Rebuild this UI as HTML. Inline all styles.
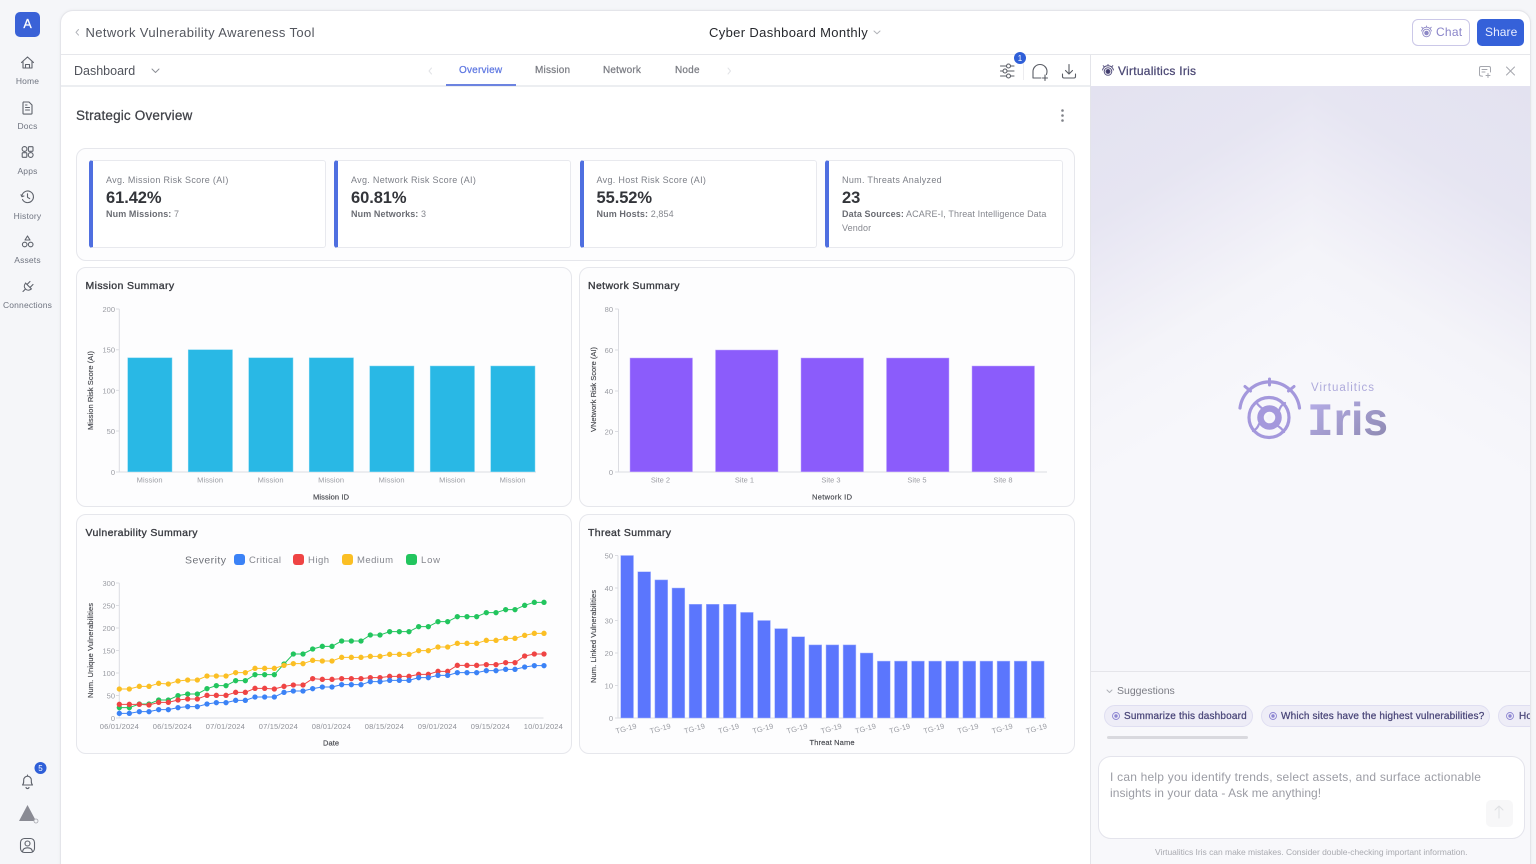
<!DOCTYPE html>
<html><head><meta charset="utf-8"><title>Cyber Dashboard Monthly</title>
<style>
*{box-sizing:border-box}
html,body{margin:0;padding:0;width:1536px;height:864px;overflow:hidden;background:#f5f6f9;font-family:"Liberation Sans",sans-serif}
.root{position:relative;width:1536px;height:864px;overflow:hidden;filter:blur(.3px)}
.a{position:absolute}
.t{position:absolute;white-space:nowrap;line-height:1;letter-spacing:.035em}
.m{-webkit-text-stroke:.25px currentColor}
.card{position:absolute;background:#fdfdfe;border:1px solid #e6e7ec;border-radius:10px}
.kpi{position:absolute;top:160px;height:88px;background:#fff;border:1px solid #e8e9ee;border-left:4px solid #4f6fe0;border-radius:3px}
.nav{position:absolute;left:0;width:55px;text-align:center;font-size:8.5px;color:#6f7480;line-height:1;letter-spacing:.02em}
.chip{position:absolute;top:705px;height:22px;background:#eeedf7;border:1px solid #dfdef1;border-radius:11px}
.lab{font-size:9px;color:#7c7f87}
.val{font-size:16.5px;font-weight:bold;color:#33353a;letter-spacing:-.005em}
.sub{font-size:9px;color:#85878e;letter-spacing:.012em}
.sub b{color:#6a6c73}
.ttl{font-size:10.5px;color:#3a3c42;-webkit-text-stroke:.35px #3a3c42}
.tab{font-size:10px;-webkit-text-stroke:.25px currentColor;letter-spacing:.02em}
.cht{font-size:10px;color:#4a4679;letter-spacing:.016em;-webkit-text-stroke:.25px #4a4679}
svg text{font-family:"Liberation Sans",sans-serif}
</style></head><body><div class="root">

<div class="a" style="left:60px;top:10px;width:1471px;height:870px;background:#fff;border:1px solid #e4e5ea;border-radius:13px;box-shadow:0 0 3px rgba(0,0,0,.05)"></div>
<div class="a" style="left:61px;top:54px;width:1469px;height:1px;background:#e6e7eb"></div>
<div class="a" style="left:61px;top:85px;width:1030px;height:2px;background:#eceef1"></div>
<div class="a" style="left:1090px;top:55px;width:1px;height:809px;background:#e4e5ea"></div>

<!-- Iris panel -->
<div class="a" style="left:1091px;top:86px;width:222px;height:586px;background:linear-gradient(149deg,#e3e2f0 0,#e6e5f2 114px,#eeedf6 191px,#f4f4f9 255px,#f7f7fb 341px)"></div>
<div class="a" style="left:1313px;top:86px;width:217px;height:586px;background:linear-gradient(211deg,#e3e2f0 0,#e6e5f2 114px,#eeedf6 191px,#f4f4f9 255px,#f7f7fb 341px)"></div>
<div class="a" style="left:1091px;top:671px;width:439px;height:193px;background:#f8f8fb;border-top:1px solid #e5e5ea;overflow:hidden">
  <div class="chip" style="left:13px;top:33px;width:149px"></div>
  <div class="chip" style="left:170px;top:33px;width:229px"></div>
  <div class="chip" style="left:407px;top:33px;width:60px"></div>
  <div class="t cht" style="left:33px;top:39.500px">Summarize this dashboard</div>
  <div class="t cht" style="left:190px;top:39.500px">Which sites have the highest vulnerabilities?</div>
  <div class="t cht" style="left:428px;top:39.500px">How</div>
</div>
<div class="a" style="left:1107px;top:736px;width:141px;height:3px;background:#d9d9de;border-radius:2px"></div>
<div class="a" style="left:1098px;top:756px;width:427px;height:83px;background:#fff;border:1px solid #e4e4ec;border-radius:13px"></div>
<div class="a" style="left:1486px;top:800px;width:27px;height:27px;background:#f7f7f8;border-radius:5px"></div>
<div class="t" style="left:1117px;top:686px;font-size:10.5px;color:#7b7c84;letter-spacing:0">Suggestions</div>
<div class="t" style="left:1110px;top:771px;font-size:12px;color:#9b9ca4;letter-spacing:.018em">I can help you identify trends, select assets, and surface actionable</div>
<div class="t" style="left:1110px;top:787px;font-size:12px;color:#9b9ca4;letter-spacing:.005em">insights in your data - Ask me anything!</div>
<div class="t" style="left:1155px;top:848px;font-size:8.5px;color:#a9aab0;letter-spacing:-.03px">Virtualitics Iris can make mistakes. Consider double-checking important information.</div>

<!-- Sidebar -->
<div class="a" style="left:15px;top:12px;width:25px;height:25px;background:#3a62d7;border-radius:5px;color:#fff;font-size:12.500px;text-align:center;line-height:25px;-webkit-text-stroke:.25px #fff">A</div>
<div class="nav" style="top:77px">Home</div>
<div class="nav" style="top:122px">Docs</div>
<div class="nav" style="top:167px">Apps</div>
<div class="nav" style="top:212px">History</div>
<div class="nav" style="top:256px">Assets</div>
<div class="nav" style="top:301px">Connections</div>

<!-- Header -->
<div class="t" style="left:85.5px;top:25.5px;font-size:13px;color:#53565e;letter-spacing:.029em">Network Vulnerability Awareness Tool</div>
<div class="t" style="left:709px;top:25.5px;font-size:13px;color:#26282d;letter-spacing:.027em">Cyber Dashboard Monthly</div>
<div class="a" style="left:1412px;top:19px;width:58px;height:27px;border:1px solid #cbc8e8;border-radius:6px;background:#fff"></div>
<div class="t" style="left:1436px;top:26px;font-size:12px;color:#8a85c9;letter-spacing:.02em">Chat</div>
<div class="a" style="left:1477px;top:19px;width:47px;height:27px;background:#3561d9;border-radius:5px"></div>
<div class="t" style="left:1485px;top:26px;font-size:12px;color:#e8edff;letter-spacing:.005em">Share</div>

<div class="t" style="left:74px;top:65px;font-size:12.5px;color:#50535b;letter-spacing:0">Dashboard</div>
<div class="t tab" style="left:459px;top:66px;color:#6079e2">Overview</div>
<div class="t tab" style="left:535px;top:66px;color:#7b7d84">Mission</div>
<div class="t tab" style="left:603px;top:66px;color:#7b7d84">Network</div>
<div class="t tab" style="left:675px;top:66px;color:#7b7d84">Node</div>
<div class="a" style="left:446px;top:84px;width:70px;height:2px;background:#6c83e0"></div>
<div class="t m" style="left:1118px;top:65px;font-size:12px;color:#4b4874;letter-spacing:.022em">Virtualitics Iris</div>

<!-- Content -->
<div class="t" style="left:76px;top:108.5px;font-size:13.5px;color:#3f4147;-webkit-text-stroke:.25px #3f4147;letter-spacing:.013em">Strategic Overview</div>
<div class="card" style="left:76px;top:148px;width:999px;height:113px"></div>
<div class="kpi" style="left:89px;width:237px"></div>
<div class="kpi" style="left:334px;width:237px"></div>
<div class="kpi" style="left:580px;width:237px"></div>
<div class="kpi" style="left:825px;width:238px"></div>

<div class="t lab" style="left:106px;top:176px">Avg. Mission Risk Score (AI)</div>
<div class="t val" style="left:106px;top:190px">61.42%</div>
<div class="t sub" style="left:106px;top:210px"><b>Num Missions:</b> 7</div>
<div class="t lab" style="left:351px;top:176px">Avg. Network Risk Score (AI)</div>
<div class="t val" style="left:351px;top:190px">60.81%</div>
<div class="t sub" style="left:351px;top:210px"><b>Num Networks:</b> 3</div>
<div class="t lab" style="left:596.5px;top:176px">Avg. Host Risk Score (AI)</div>
<div class="t val" style="left:596.5px;top:190px">55.52%</div>
<div class="t sub" style="left:596.5px;top:210px"><b>Num Hosts:</b> 2,854</div>
<div class="t lab" style="left:842px;top:176px">Num. Threats Analyzed</div>
<div class="t val" style="left:842px;top:190px">23</div>
<div class="t sub" style="left:842px;top:210px"><b>Data Sources:</b> ACARE-I, Threat Intelligence Data</div>
<div class="t sub" style="left:842px;top:224px">Vendor</div>

<div class="card" style="left:76px;top:267px;width:496px;height:240px"></div>
<div class="card" style="left:579px;top:267px;width:496px;height:240px"></div>
<div class="card" style="left:76px;top:514px;width:496px;height:240px"></div>
<div class="card" style="left:579px;top:514px;width:496px;height:240px"></div>
<div class="t ttl" style="left:85.5px;top:280.5px">Mission Summary</div>
<div class="t ttl" style="left:588px;top:280.5px">Network Summary</div>
<div class="t ttl" style="left:85.5px;top:527.5px">Vulnerability Summary</div>
<div class="t ttl" style="left:588px;top:527.5px">Threat Summary</div>

<svg class="a" style="left:0;top:0" width="1536" height="864" viewBox="0 0 1536 864" fill="none">
<defs>
<marker id="mg" markerUnits="userSpaceOnUse" markerWidth="20" markerHeight="20" refX="10" refY="10"><circle cx="10" cy="10" r="8" fill="#22c55e"/></marker>
<marker id="my" markerUnits="userSpaceOnUse" markerWidth="20" markerHeight="20" refX="10" refY="10"><circle cx="10" cy="10" r="8" fill="#fbbf24"/></marker>
<marker id="mr" markerUnits="userSpaceOnUse" markerWidth="20" markerHeight="20" refX="10" refY="10"><circle cx="10" cy="10" r="8" fill="#ef4444"/></marker>
<marker id="mb" markerUnits="userSpaceOnUse" markerWidth="20" markerHeight="20" refX="10" refY="10"><circle cx="10" cy="10" r="8" fill="#3b82f6"/></marker>
<linearGradient id="irisg" x1="0" y1="0" x2="1" y2="1"><stop offset="0" stop-color="#b9b0ec"/><stop offset="1" stop-color="#8985ab"/></linearGradient>
</defs>

<!-- sidebar icons -->
<g stroke="#5f636c" stroke-width="1.1" stroke-linecap="round" stroke-linejoin="round">
<path d="M21.5 62.5l6-5.500 6 5.500M23 61.500v6.500h9v-6.500M25.500 68v-3.500h4V68"/>
<path d="M24 102h5l3 3v8.300a.8.8 0 0 1-.8.8h-7.400a.8.8 0 0 1-.8-.8v-10.500a.8.8 0 0 1 1-.8zM25.500 107.500h4M25.500 110h4M25.500 105h1.500"/>
<circle cx="24.500" cy="149" r="2.400"/><rect x="28.400" y="146.700" width="4.600" height="4.600" rx=".8"/><rect x="22.200" y="152.700" width="4.600" height="4.600" rx=".8"/><circle cx="30.700" cy="155" r="2.400"/>
<path d="M22.500 199.500a5.800 5.800 0 1 0-.6-3.500M21 194.800l.9 1.900 2-.7M27.500 193.800v3.500l2.200 1.300"/>
<path d="M27.500 236l2.500 4h-5z"/><circle cx="24.700" cy="244.500" r="2.300"/><circle cx="30.700" cy="244.500" r="2.300"/>
<path d="M23 291.500l2-2M25.500 283l6 6M25 284a4 4 0 0 0 .5 5 4 4 0 0 0 5 .5M30 281.500l-2.500 2.500M33 284.500l-2.500 2.500"/>
<path d="M22.500 785c1.200-1.200 1.200-2.500 1.200-5a3.800 3.800 0 0 1 7.600 0c0 2.500 0 3.800 1.200 5zM26 787.500a1.600 1.600 0 0 0 3 0M27.500 775v1"/>
<rect x="20.500" y="838.500" width="14" height="14" rx="4"/><circle cx="27.500" cy="843.500" r="2.500"/><path d="M22.500 851.500c.5-3 2.500-3.700 5-3.700s4.500.7 5 3.700"/>
</g>
<circle cx="40.500" cy="768" r="6" fill="#2f5fd8"/><text x="40.500" y="771" font-size="8" fill="#fff" text-anchor="middle">5</text>
<path d="M27.500 805l8.500 16H19z" fill="#8a8b94"/><circle cx="36" cy="821" r="2" fill="#f5f6f9" stroke="#a5a6ad" stroke-width=".8"/>

<!-- header icons -->
<g stroke="#b0b2b8" stroke-width="1" stroke-linecap="round" stroke-linejoin="round">
<path d="M78.500 29.500l-2.500 2.800 2.500 2.800"/>
<path d="M152 69l3.500 3.500L159 69" stroke="#8d8f96"/>
<path d="M874 31l3 2.800 3-2.800"/>
<path d="M431.500 68l-2.500 3 2.500 3" stroke="#e2e3e7"/>
<path d="M728 68l2.500 3-2.500 3" stroke="#e2e3e7"/>
<path d="M1107 690l2.500 2.500 2.500-2.500"/>
</g>
<g stroke="#5a5d65" stroke-width="1.100" stroke-linecap="round" stroke-linejoin="round">
<path d="M1000.500 66h6M1011 66h3M1000.500 71h2.500M1007.500 71h6.500M1000.500 76h6M1011 76h3"/>
<circle cx="1008.500" cy="66" r="2"/><circle cx="1005" cy="71" r="2"/><circle cx="1008.500" cy="76" r="2"/>
<path d="M1033 78v-6.500a7 7 0 0 1 14 0c0 1-.2 2-.6 3M1033 78h8M1045 75v5.500M1042.500 78h5"/>
<path d="M1069 64.500v9M1065.500 70.500l3.500 3.500 3.500-3.500M1062.500 74v2.500a1.500 1.500 0 0 0 1.500 1.500h10a1.500 1.500 0 0 0 1.500-1.500V74"/>
</g>
<path d="M1023.500 60v20" stroke="#ececef"/>
<circle cx="1020" cy="58" r="6" fill="#2f5fd8"/><text x="1020" y="61" font-size="8" fill="#fff" text-anchor="middle">1</text>
<g stroke="#a5a7ae" stroke-width="1" stroke-linecap="round" stroke-linejoin="round">
<path d="M1482.500 76.200l-1.500-.2a1.500 1.500 0 0 1-1.500-1.500v-6.500a1.500 1.500 0 0 1 1.500-1.500h8a1.500 1.500 0 0 1 1.500 1.500v4M1482 69.500h5M1482 72h3M1486 75.500h4M1488 73.500v4"/>
<path d="M1506.500 67l8 8M1514.500 67l-8 8"/>
<path d="M1499 818v-12M1495 810l4-4 4 4" stroke="#dfe0e3"/>
</g>

<!-- Iris small icons -->
<g stroke="#8d88c6" stroke-width=".9" stroke-linecap="round">
<circle cx="1426.500" cy="33" r="3.800"/><circle cx="1426.500" cy="33" r="1.800" fill="#8d88c6"/><path d="M1421.500 31c1-2.500 2.800-3.800 5-3.800s4 1.300 5 3.800M1426.500 27v-1M1422.500 28l-.8-.8M1430.500 28l.8-.8"/>
</g>
<g stroke="#56527f" stroke-width="1" stroke-linecap="round">
<circle cx="1108" cy="71.500" r="3.800"/><circle cx="1108" cy="71.500" r="2" fill="#3f3b6b"/><path d="M1102.500 70c1-3 3-4.300 5.500-4.300s4.500 1.300 5.500 4.300M1108 65.500v-1M1104 66.500l-.8-.8M1112 66.500l.8-.8"/>
</g>
<g fill="#8d86d2"><circle cx="1116" cy="716" r="1.700"/><circle cx="1273" cy="716" r="1.700"/><circle cx="1510" cy="716" r="1.700"/></g>
<g stroke="#8d86d2" stroke-width=".9"><circle cx="1116" cy="716" r="3.500"/><circle cx="1273" cy="716" r="3.500"/><circle cx="1510" cy="716" r="3.500"/></g>

<!-- Iris logo -->
<g stroke="#a498dc" stroke-linecap="round" fill="none">
<circle cx="1269" cy="417.500" r="20" stroke-width="3.200"/>
<circle cx="1269.500" cy="417.500" r="9" stroke-width="6.500"/>
<path d="M1240 408a30 30 0 0 1 59.500 0" stroke-width="3.200"/>
<path d="M1269.500 379v6M1245 386.500l5.500 4.500M1294 386.500l-5.500 4.500" stroke-width="3"/>
<path d="M1256 402c2 3 4 5 7 7M1285 403c-3 1.500-5 4-6 8M1284 432c-2-3-4-5-7-6.500M1253 431c3-1.500 5-4 6-7" stroke-width="2.200"/>
</g>
<path d="M1269.500 413l4 4.500-4 4.500-4-4.500z" fill="#f4f3fb"/>
<text x="1311" y="391" font-size="11.500" fill="#aeaadb" textLength="63">Virtualitics</text>
<text x="1307" y="435" font-size="46" font-weight="bold" fill="url(#irisg)" textLength="81" lengthAdjust="spacingAndGlyphs"><tspan style="font-family:'Liberation Mono',monospace">I</tspan>ris</text>

<!-- Three dots -->
<g fill="#7f8188"><circle cx="1062.500" cy="110.500" r="1.300"/><circle cx="1062.500" cy="115.500" r="1.300"/><circle cx="1062.500" cy="120.500" r="1.300"/></g>

<!-- Mission chart -->
<path d="M119.300 309v163H536M116 309h3.300M116 349.700h3.300M116 390.400h3.300M116 431h3.300M116 472h3.300" stroke="#dcdde2"/>
<g font-size="7.500" fill="#9a9ca3" text-anchor="end"><text x="115" y="312">200</text><text x="115" y="352.700">150</text><text x="115" y="393.400">100</text><text x="115" y="434">50</text><text x="115" y="475">0</text></g>
<g fill="#29b8e5" stroke="#7fd6f2" stroke-width=".5">
<rect x="127.700" y="357.800" width="44.300" height="114"/><rect x="188.200" y="349.700" width="44.300" height="122.100"/><rect x="248.700" y="357.800" width="44.300" height="114"/><rect x="309.200" y="357.800" width="44.300" height="114"/><rect x="369.700" y="366" width="44.300" height="105.800"/><rect x="430.200" y="366" width="44.300" height="105.800"/><rect x="490.700" y="366" width="44.300" height="105.800"/>
</g>
<g font-size="7.500" fill="#9a9ca3" text-anchor="middle"><text x="149.600" y="482.500" textLength="26">Mission</text><text x="210.100" y="482.500" textLength="26">Mission</text><text x="270.600" y="482.500" textLength="26">Mission</text><text x="331.100" y="482.500" textLength="26">Mission</text><text x="391.600" y="482.500" textLength="26">Mission</text><text x="452.100" y="482.500" textLength="26">Mission</text><text x="512.600" y="482.500" textLength="26">Mission</text></g>
<text x="331" y="499.500" font-size="7.500" fill="#45474d" text-anchor="middle" stroke="#45474d" stroke-width=".15" textLength="36">Mission ID</text>
<text transform="translate(93 430) rotate(-90)" font-size="7.500" fill="#45474d" stroke="#45474d" stroke-width=".15" textLength="79">Mission Risk Score (AI)</text>

<!-- Network chart -->
<path d="M618.500 309v163H1047M615 309h3.500M615 350h3.500M615 391h3.500M615 431.500h3.500M615 472h3.500" stroke="#dcdde2"/>
<g font-size="7.500" fill="#9a9ca3" text-anchor="end"><text x="613" y="312">80</text><text x="613" y="353">60</text><text x="613" y="394">40</text><text x="613" y="434.500">20</text><text x="613" y="475">0</text></g>
<g fill="#8b5cfb" stroke="#c2a8fd" stroke-width=".5">
<rect x="630" y="358" width="62.500" height="113.800"/><rect x="715.500" y="350" width="62.500" height="121.800"/><rect x="801" y="358" width="62.500" height="113.800"/><rect x="886.500" y="358" width="62.500" height="113.800"/><rect x="972" y="366" width="62.500" height="105.800"/>
</g>
<g font-size="7.500" fill="#9a9ca3" text-anchor="middle"><text x="660.500" y="482.500">Site 2</text><text x="744.500" y="482.500">Site 1</text><text x="831" y="482.500">Site 3</text><text x="917" y="482.500">Site 5</text><text x="1003" y="482.500">Site 8</text></g>
<text x="832" y="499.500" font-size="7.500" fill="#45474d" text-anchor="middle" stroke="#45474d" stroke-width=".15" textLength="40">Network ID</text>
<text transform="translate(596 432) rotate(-90)" font-size="7.500" fill="#45474d" stroke="#45474d" stroke-width=".15" textLength="85">VNetwork Risk Score (AI)</text>

<!-- Legend -->
<text x="185" y="563.500" font-size="10.500" fill="#6f7279" textLength="41">Severity</text>
<rect x="234" y="554" width="11" height="11" rx="3" fill="#3b82f6"/><text x="249" y="563" font-size="9.500" fill="#85878e" textLength="32">Critical</text>
<rect x="293" y="554" width="11" height="11" rx="3" fill="#ef4444"/><text x="308" y="563" font-size="9.500" fill="#85878e" textLength="21">High</text>
<rect x="342" y="554" width="11" height="11" rx="3" fill="#fbbf24"/><text x="357" y="563" font-size="9.500" fill="#85878e" textLength="36">Medium</text>
<rect x="406" y="554" width="11" height="11" rx="3" fill="#22c55e"/><text x="421" y="563" font-size="9.500" fill="#85878e" textLength="19">Low</text>

<!-- Line chart -->
<path d="M119.300 583v135H543.500M116 583h3.300M116 605.500h3.300M116 628h3.300M116 650.500h3.300M116 673h3.300M116 695.500h3.300M116 718h3.300" stroke="#dcdde2"/>
<g font-size="7.500" fill="#9a9ca3" text-anchor="end"><text x="115" y="586">300</text><text x="115" y="608.500">250</text><text x="115" y="631">200</text><text x="115" y="653.500">150</text><text x="115" y="676">100</text><text x="115" y="698.500">50</text><text x="115" y="721">0</text></g>
<g font-size="7.500" fill="#8f9198" text-anchor="middle"><text x="119.300" y="729" textLength="39">06/01/2024</text><text x="172.300" y="729" textLength="39">06/15/2024</text><text x="225.300" y="729" textLength="39">07/01/2024</text><text x="278.300" y="729" textLength="39">07/15/2024</text><text x="331.300" y="729" textLength="39">08/01/2024</text><text x="384.300" y="729" textLength="39">08/15/2024</text><text x="437.300" y="729" textLength="39">09/01/2024</text><text x="490.300" y="729" textLength="39">09/15/2024</text><text x="543.300" y="729" textLength="39">10/01/2024</text></g>
<text x="331" y="745.500" font-size="7.500" fill="#45474d" text-anchor="middle" stroke="#45474d" stroke-width=".15" textLength="16">Date</text>
<text transform="translate(93 698) rotate(-90)" font-size="7.500" fill="#45474d" stroke="#45474d" stroke-width=".15" textLength="95">Num. Unique Vulnerabilities</text>
<g transform="translate(76 540) scale(.33333)" stroke-width="3" fill="none">
<polyline stroke="#22c55e" style="marker-start:url(#mg);marker-mid:url(#mg);marker-end:url(#mg)" points="130,503 160,503 190,492 219,492 248,480 277,480 306,467 335,462 364,462 393,446 421,437 450,437 479,422 508,422 537,404 566,404 595,404 624,372 652,342 681,342 710,327 739,319 768,319 797,303 826,303 855,303 883,285 912,285 941,275 970,275 999,275 1028,260 1057,260 1086,245 1115,245 1144,230 1173,230 1202,230 1231,218 1260,218 1289,209 1317,209 1346,196 1375,187 1404,187"/>
<polyline stroke="#fbbf24" style="marker-start:url(#my);marker-mid:url(#my);marker-end:url(#my)" points="130,447 160,447 190,439 219,439 248,430 277,432 306,423 335,420 364,420 393,408 421,408 450,408 479,398 508,398 537,385 566,385 595,385 624,376 652,371 681,371 710,361 739,363 768,363 797,352 826,352 855,352 883,349 912,349 941,343 970,343 999,343 1028,332 1057,332 1086,321 1115,321 1144,310 1173,310 1202,310 1231,301 1260,301 1289,295 1317,295 1346,286 1375,280 1404,280"/>
<polyline stroke="#ef4444" style="marker-start:url(#mr);marker-mid:url(#mr);marker-end:url(#mr)" points="130,493 160,493 190,493 219,495 248,487 277,487 306,480 335,477 364,477 393,466 421,466 450,466 479,457 508,457 537,445 566,445 595,447 624,439 652,435 681,435 710,416 739,418 768,418 797,416 826,416 855,416 883,413 912,413 941,409 970,409 999,409 1028,403 1057,403 1086,394 1115,394 1144,376 1173,376 1202,376 1231,374 1260,374 1289,368 1317,368 1346,348 1375,342 1404,342"/>
<polyline stroke="#3b82f6" style="marker-start:url(#mb);marker-mid:url(#mb);marker-end:url(#mb)" points="130,520 160,520 190,515 219,515 248,509 277,509 306,503 335,500 364,500 393,492 421,488 450,488 479,481 508,481 537,471 566,471 595,471 624,457 652,453 681,453 710,446 739,441 768,441 797,434 826,434 855,434 883,425 912,425 941,421 970,421 999,421 1028,413 1057,413 1086,406 1115,406 1144,398 1173,398 1202,398 1231,392 1260,392 1289,388 1317,388 1346,381 1375,377 1404,377"/>
</g>

<!-- Threat chart -->
<path d="M618 555.500V718H1046M615 555.500h3M615 588h3M615 620.500h3M615 653h3M615 685.500h3M615 718h3" stroke="#dcdde2"/>
<g font-size="7.500" fill="#9a9ca3" text-anchor="end"><text x="613" y="558.500">50</text><text x="613" y="591">40</text><text x="613" y="623.500">30</text><text x="613" y="656">20</text><text x="613" y="688.500">10</text><text x="613" y="721">0</text></g>
<g fill="#5b76fd" stroke="#a9b8fe" stroke-width=".5">
<rect x="620.700" y="555.500" width="12.800" height="162.500"/><rect x="637.800" y="571.750" width="12.800" height="146.250"/><rect x="654.900" y="579.900" width="12.800" height="138.100"/><rect x="672" y="588" width="12.800" height="130"/><rect x="689.100" y="604.250" width="12.800" height="113.750"/><rect x="706.300" y="604.250" width="12.800" height="113.750"/><rect x="723.400" y="604.250" width="12.800" height="113.750"/><rect x="740.500" y="612.400" width="12.800" height="105.600"/><rect x="757.600" y="620.500" width="12.800" height="97.500"/><rect x="774.700" y="628.600" width="12.800" height="89.400"/><rect x="791.800" y="636.750" width="12.800" height="81.250"/><rect x="808.900" y="644.900" width="12.800" height="73.100"/><rect x="826" y="644.900" width="12.800" height="73.100"/><rect x="843.100" y="644.900" width="12.800" height="73.100"/><rect x="860.200" y="653" width="12.800" height="65"/><rect x="877.400" y="661.100" width="12.800" height="56.900"/><rect x="894.500" y="661.100" width="12.800" height="56.900"/><rect x="911.600" y="661.100" width="12.800" height="56.900"/><rect x="928.700" y="661.100" width="12.800" height="56.900"/><rect x="945.800" y="661.100" width="12.800" height="56.900"/><rect x="962.900" y="661.100" width="12.800" height="56.900"/><rect x="980" y="661.100" width="12.800" height="56.900"/><rect x="997.100" y="661.100" width="12.800" height="56.900"/><rect x="1014.200" y="661.100" width="12.800" height="56.900"/><rect x="1031.300" y="661.100" width="12.800" height="56.900"/>
</g>
<g font-size="7.500" fill="#9a9ca3" text-anchor="middle">
<text transform="translate(626.700 731) rotate(-15)">TG-19</text><text transform="translate(660.900 731) rotate(-15)">TG-19</text><text transform="translate(695.100 731) rotate(-15)">TG-19</text><text transform="translate(729.300 731) rotate(-15)">TG-19</text><text transform="translate(763.500 731) rotate(-15)">TG-19</text><text transform="translate(797.700 731) rotate(-15)">TG-19</text><text transform="translate(831.900 731) rotate(-15)">TG-19</text><text transform="translate(866.100 731) rotate(-15)">TG-19</text><text transform="translate(900.300 731) rotate(-15)">TG-19</text><text transform="translate(934.500 731) rotate(-15)">TG-19</text><text transform="translate(968.700 731) rotate(-15)">TG-19</text><text transform="translate(1002.900 731) rotate(-15)">TG-19</text><text transform="translate(1037.100 731) rotate(-15)">TG-19</text>
</g>
<text x="832" y="745" font-size="7.500" fill="#45474d" text-anchor="middle" stroke="#45474d" stroke-width=".15" textLength="45">Threat Name</text>
<text transform="translate(596 683) rotate(-90)" font-size="7.500" fill="#45474d" stroke="#45474d" stroke-width=".15" textLength="93">Num. Linked Vulnerabilities</text>
</svg>
</div></body></html>
